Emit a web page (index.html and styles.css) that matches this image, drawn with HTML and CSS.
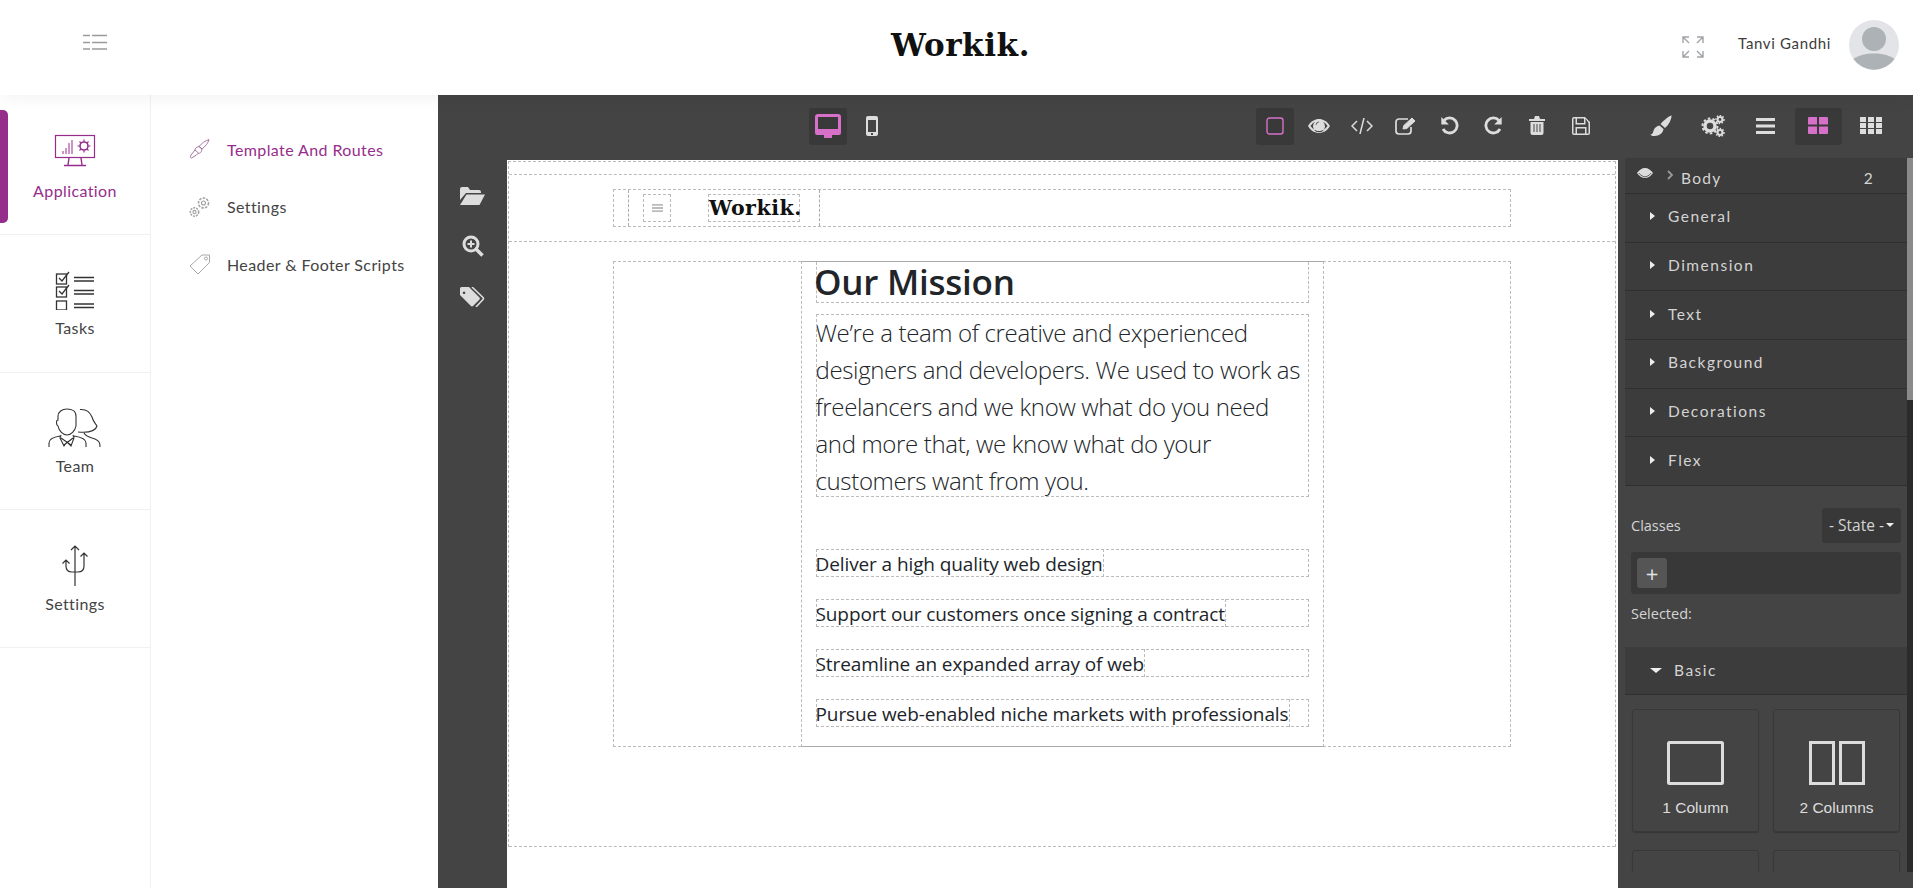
FILE: index.html
```html
<!DOCTYPE html>
<html lang="en">
<head>
<meta charset="utf-8">
<title>Workik</title>
<link rel="stylesheet" href="styles.css">
</head>
<body>
<header class="topbar">
  <div class="topbar-menu">
    <svg class="hamburger" width="24" height="16" viewBox="0 0 24 16"><path d="M0 1.500h7M9 1.500h15M0 8.500h7M9 8.500h15M0 15h7M9 15h15" stroke="#9a9a9a" stroke-width="1.600" fill="none"/></svg>
  </div>
  <div class="brand">Workik.</div>
  <div class="topbar-user">
    <svg class="expand" width="22" height="22" viewBox="0 0 22 22" fill="none" stroke="#9ea3a8" stroke-width="1.400"><path d="M1 7V1h6M1 1l6 6M15 1h6v6M21 1l-6 6M1 15v6h6M1 21l6-6M21 15v6h-6M21 21l-6-6"/></svg>
    <span class="user-name">Tanvi Gandhi</span>
    <svg class="avatar" width="50" height="50" viewBox="0 0 50 50"><circle cx="25" cy="25" r="25" fill="#e2e4e7"/><circle cx="25" cy="19" r="12" fill="#adb2b6"/><path d="M4.500 39C10 35 17 33.500 25 33.500S40 35 45.500 39A25 25 0 0 1 4.500 39Z" fill="#adb2b6"/></svg>
  </div>
</header>

<div class="workspace">
  <nav class="mainnav">
    <a class="mainnav-item is-active">
      <svg width="42" height="33" viewBox="0 0 42 33" fill="none" stroke="#962d8b" stroke-width="1.200"><rect x="1.500" y="1.500" width="39" height="22"/><path d="M9 20v-3M12 20v-6M15 20V9M18 20V6" stroke-width="1"/><circle cx="30" cy="12" r="4" stroke-width="1.600"/><path d="M30 5.500v2M30 16.500v2M23.500 12h2M34.500 12h2M25.500 7.500l1.300 1.300M33.200 15.200l1.300 1.300M34.500 7.500l-1.300 1.300M26.800 15.200l-1.300 1.300" stroke-width="1.200"/><path d="M15 24l-1 7M27 24l1 7M10 31.500h22" stroke-width="1.400"/></svg>
      <span>Application</span>
    </a>
    <a class="mainnav-item">
      <svg width="40" height="40" viewBox="0 0 40 40" fill="none" stroke="#333" stroke-width="1.300"><rect x="1.500" y="4" width="10" height="10"/><rect x="1.500" y="17" width="10" height="10"/><rect x="1.500" y="31" width="10" height="9"/><path d="M4 8l3 3 7-9M4 21l3 3 7-9" /><path d="M19 7.500h20M19 11h20M19 20.500h20M19 24h20M19 34h20M19 37.500h20"/></svg>
      <span>Tasks</span>
    </a>
    <a class="mainnav-item">
      <svg width="54" height="40" viewBox="0 0 54 40" fill="none" stroke="#333" stroke-width="1.100"><path d="M10 12C8 12 8 17 10 18C11 23 15 27 19 27S27 23 28 18V8C28 3 24 1 19 1S10 4 10 8Z"/><path d="M1 39V35C1 31 6 29 12 28M38 39V35C38 31 33 29 26 28M13 27l-1 3 4 8 3-4 4 4 3-8-1-3M13 30l10 7M25 30l-9 7"/><path d="M32 1.500C38 1 42 4 44 9C45 13 47 15 49 18C48 22 42 25 30 24M36 25C38 29 42 29 47 31C52 33 52 36 52 39"/></svg>
      <span>Team</span>
    </a>
    <a class="mainnav-item">
      <svg width="28" height="41" viewBox="0 0 28 41" fill="none" stroke="#333" stroke-width="1.200"><path d="M14 1v40M10 5l4-4 4 4M5 15v6c0 4 2 6 6 6h6c4 0 6-2 6-6V8M1.500 18.500 5 15l3.500 3.500M19.500 11.500 23 8l3.500 3.500"/></svg>
      <span>Settings</span>
    </a>
  </nav>

  <aside class="subnav">
    <a class="subnav-item is-active">
      <svg width="22" height="22" viewBox="0 0 22 22" fill="none" stroke="#a878a3" stroke-width="1"><path d="M20 1.500c-1 4-4 7-7 9.500l-3-2.500C13 5 16 3 20 1.500ZM10 8.500l3 2.500c-.5 3-2 5-3.500 4L6 12c-.5-1.500 2-3 4-3.500ZM6 12l-4 5c-1 2-.5 3 .5 3l5-3 2-2"/></svg>
      <span>Template And Routes</span>
    </a>
    <a class="subnav-item">
      <svg width="22" height="22" viewBox="0 0 22 22" fill="none" stroke="#a0a0a0" stroke-width="1.100"><circle cx="14.500" cy="7" r="2"/><circle cx="14.500" cy="7" r="5" stroke-dasharray="2.500 1.200" stroke-width="1.500"/><circle cx="5.500" cy="16" r="1.600"/><circle cx="5.500" cy="16" r="4.200" stroke-dasharray="2 1" stroke-width="1.500"/></svg>
      <span>Settings</span>
    </a>
    <a class="subnav-item">
      <svg width="22" height="22" viewBox="0 0 22 22" fill="none" stroke="#a8a8a8" stroke-width="1"><path d="M1 13 13 2h7.500v7.500L9 21Z"/><circle cx="17" cy="5.500" r="1.500"/></svg>
      <span>Header &amp; Footer Scripts</span>
    </a>
  </aside>

  <main class="editor">
    <div class="toolbar">
      <div class="tool-group">
        <button class="tool is-on"><svg width="26" height="24" viewBox="0 0 26 24"><path d="M3 0h20a3 3 0 0 1 3 3v16a2 2 0 0 1-2 2h-7v3H9v-3H2a2 2 0 0 1-2-2V3a3 3 0 0 1 3-3Zm0 3v12h20V3Z" fill="#d670c9" fill-rule="evenodd"/></svg></button>
        <button class="tool"><svg width="12" height="20" viewBox="0 0 12 20"><path d="M2 0h8a2 2 0 0 1 2 2v16a2 2 0 0 1-2 2H2a2 2 0 0 1-2-2V2a2 2 0 0 1 2-2Zm0 4v12h8V4Z" fill="#ddd" fill-rule="evenodd"/><rect x="5" y="17" width="2" height="2" fill="#444"/></svg></button>
      </div>
      <div class="tool-group actions">
        <button class="tool is-on"><svg width="18" height="18" viewBox="0 0 18 18"><rect x="1" y="1" width="16" height="16" rx="2.500" fill="none" stroke="#d670c9" stroke-width="1.400"/></svg></button>
        <button class="tool"><svg width="22" height="14" viewBox="0 0 22 14"><path d="M0 7C3 2 7 0 11 0s8 2 11 7c-3 5-7 7-11 7S3 12 0 7Zm2.500 0c2.500 3.500 5.500 5 8.500 5s6-1.500 8.500-5C18 5 16.500 3.500 15 2.800a6 6 0 1 1-8 0C5.500 3.500 4 5 2.500 7Z" fill="#ddd" fill-rule="evenodd"/><circle cx="11" cy="7" r="5" fill="#ddd"/><path d="M8 6a3 3 0 0 1 3-3" stroke="#666" fill="none"/></svg></button>
        <button class="tool"><svg width="22" height="16" viewBox="0 0 22 16" fill="none" stroke="#ddd" stroke-width="1.500"><path d="M6 3 1 8l5 5M16 3l5 5-5 5M13 0 9 16"/></svg></button>
        <button class="tool"><svg width="22" height="18" viewBox="0 0 22 18" fill="none" stroke="#ddd" stroke-width="1.700"><path d="M13 2H4a3 3 0 0 0-3 3v9a3 3 0 0 0 3 3h9a3 3 0 0 0 3-3v-4"/><path d="M8 12l.8-3.500L17 1l3 3-8.200 7.500Z" fill="#ddd" stroke-width="1"/></svg></button>
        <button class="tool"><svg width="19" height="19" viewBox="0 0 19 19" fill="none" stroke="#ddd" stroke-width="2.800"><path d="M4 4.500a7.500 7.500 0 1 1-1 8.500"/><path d="M1.300 1v7.500h7.500L1.300 1Z" fill="#ddd" stroke="none"/></svg></button>
        <button class="tool"><svg width="19" height="19" viewBox="0 0 19 19" fill="none" stroke="#ddd" stroke-width="2.800"><path d="M15 4.500a7.500 7.500 0 1 0 1 8.500"/><path d="M17.700 1v7.500h-7.500L17.700 1Z" fill="#ddd" stroke="none"/></svg></button>
        <button class="tool"><svg width="16" height="19" viewBox="0 0 16 19"><path d="M0 3h5l1-3h4l1 3h5v2H0ZM1.500 6h13v11a2 2 0 0 1-2 2h-9a2 2 0 0 1-2-2Z" fill="#ddd"/><path d="M5 8v8M8 8v8M11 8v8" stroke="#555" stroke-width="1.100"/></svg></button>
        <button class="tool"><svg width="18" height="18" viewBox="0 0 18 18"><path d="M2 0h11l5 5v11a2 2 0 0 1-2 2H2a2 2 0 0 1-2-2V2a2 2 0 0 1 2-2Zm3 1.500V6h7V1.500ZM1.500 16.500h2V10h11v6.500h2V6L13.500 1.800V7.500h-10V1.500h-2ZM5 11.500v5h8v-5Z" fill="#ddd" fill-rule="evenodd"/></svg></button>
      </div>
      <div class="tool-group panels">
        <button class="tool wide"><svg width="22" height="22" viewBox="0 0 22 22"><path d="M21.500.5c.5 3-3 10-6.500 12.500L10.500 9C14 5 19 1 21.500.5ZM9.500 10.500l4 3.500c-.5 4-4 7-9 7-2 0-3.500-.5-4-1.500 3-.5 2.500-3 3.500-5s3-3.500 5.500-4Z" fill="#ddd"/></svg></button>
        <button class="tool wide"><svg width="24" height="22" viewBox="0 0 24 22" fill="none" stroke="#ddd"><circle cx="9" cy="11" r="5" stroke-width="3.500"/><circle cx="9" cy="11" r="7.500" stroke-width="2" stroke-dasharray="2.500 2.200"/><circle cx="19" cy="4.500" r="2.400" stroke-width="2"/><circle cx="19" cy="4.500" r="4" stroke-width="1.500" stroke-dasharray="1.500 1.500"/><circle cx="19" cy="17.500" r="2.400" stroke-width="2"/><circle cx="19" cy="17.500" r="4" stroke-width="1.500" stroke-dasharray="1.500 1.500"/></svg></button>
        <button class="tool wide"><svg width="19" height="16" viewBox="0 0 19 16"><path d="M0 0h19v3H0ZM0 6.500h19v3H0ZM0 13h19v3H0Z" fill="#ddd"/></svg></button>
        <button class="tool wide is-on"><svg width="20" height="17" viewBox="0 0 20 17"><path d="M1 0h8v7.500H0V1a1 1 0 0 1 1-1ZM11 0h8a1 1 0 0 1 1 1v6.500h-9ZM0 9.500h9V17H1a1 1 0 0 1-1-1ZM11 9.500h9V16a1 1 0 0 1-1 1h-8Z" fill="#d670c9"/></svg></button>
        <button class="tool wide"><svg width="22" height="17" viewBox="0 0 22 17"><path d="M0 0h6v5H0ZM8 0h6v5H8ZM16 0h6v5h-6ZM0 6h6v5H0ZM8 6h6v5H8ZM16 6h6v5h-6ZM0 12h6v5H0ZM8 12h6v5H8ZM16 12h6v5h-6Z" fill="#ddd"/></svg></button>
      </div>
    </div>

    <div class="stage">
      <div class="rail">
        <svg width="25" height="18" viewBox="0 0 25 18"><path d="M0 2a2 2 0 0 1 2-2h6l2 3h9a2 2 0 0 1 2 2v1H6L0 13Z" fill="#ddd"/><path d="M6.500 7.500H25L19.500 18H0Z" fill="#ddd"/></svg>
        <svg width="22" height="22" viewBox="0 0 22 22" fill="none"><circle cx="9" cy="9" r="7" stroke="#ddd" stroke-width="3"/><path d="M14 14l6.500 6.500" stroke="#ddd" stroke-width="3.500"/><path d="M5.500 9h7M9 5.500v7" stroke="#ddd" stroke-width="2"/></svg>
        <svg width="25" height="20" viewBox="0 0 25 20"><path d="M0 1.500A1.500 1.500 0 0 1 1.500 0H9l10.500 10.500a1.500 1.500 0 0 1 0 2L13 19a1.500 1.500 0 0 1-2 0L0 8Zm4 3a1.300 1.300 0 1 0 .1 0Z" fill="#ddd" fill-rule="evenodd"/><path d="M12 0l11 10.500a1.500 1.500 0 0 1 0 2L16 20" fill="none" stroke="#ddd" stroke-width="1.600"/></svg>
      </div>

      <section class="canvas">
        <div class="page-frame">
          <div class="site-head">
            <div class="head-container">
              <div class="head-row">
                <div class="menu-box"><svg width="11" height="8" viewBox="0 0 11 8"><path d="M0 0h11v1.800H0ZM0 3.100h11v1.800H0ZM0 6.200h11V8H0Z" fill="#bbb"/></svg></div>
                <div class="logo-box">Workik.</div>
              </div>
            </div>
          </div>
          <div class="site-main">
            <div class="main-container">
              <div class="mission">
                <h1 class="mission-title">Our Mission</h1>
                <div class="mission-text"><p>We’re a team of creative and experienced designers and developers. We used to work as freelancers and we know what do you need and more that, we know what do your customers want from you.</p></div>
                <ul class="mission-list">
                  <li><span>Deliver a high quality web design</span></li>
                  <li><span>Support our customers once signing a contract</span></li>
                  <li><span>Streamline an expanded array of web</span></li>
                  <li><span>Pursue web-enabled niche markets with professionals</span></li>
                </ul>
              </div>
            </div>
          </div>
        </div>
      </section>

      <aside class="panel">
        <div class="panel-scroll">
          <div class="panel-content">
            <div class="layer-row">
              <svg class="layer-eye" width="16" height="10" viewBox="0 0 16 10"><path d="M0 5c2-3 5-5 8-5s6 2 8 5c-2 3-5 5-8 5S2 8 0 5Z" fill="#ddd"/><path d="M1.800 5C4 7.500 6 8.800 8 8.800S12 7.500 14.200 5" fill="none" stroke="#3c3c3c" stroke-width=".8"/></svg>
              <svg class="layer-chevron" width="7" height="10" viewBox="0 0 7 10"><path d="M1 1l4 4-4 4" fill="none" stroke="#999" stroke-width="1.800"/></svg>
              <span class="layer-name">Body</span>
              <span class="layer-count">2</span>
            </div>
            <div class="prop-row"><i class="caret"></i>General</div>
            <div class="prop-row"><i class="caret"></i>Dimension</div>
            <div class="prop-row"><i class="caret"></i>Text</div>
            <div class="prop-row"><i class="caret"></i>Background</div>
            <div class="prop-row"><i class="caret"></i>Decorations</div>
            <div class="prop-row"><i class="caret"></i>Flex</div>

            <div class="classes">
              <div class="classes-head">
                <span>Classes</span>
                <div class="state">- State -<i class="caret-down small"></i></div>
              </div>
              <div class="class-box"><button class="class-add">+</button></div>
              <div class="selected">Selected:</div>
            </div>

            <div class="section-head"><i class="caret-down"></i>Basic</div>
            <div class="blocks">
              <div class="block">
                <svg width="57" height="44" viewBox="0 0 57 44"><rect x="1.500" y="1.500" width="54" height="41" rx="1" fill="none" stroke="#ddd" stroke-width="3"/></svg>
                <span>1 Column</span>
              </div>
              <div class="block">
                <svg width="56" height="44" viewBox="0 0 56 44"><path d="M1.500 1.500h23v41h-23ZM31.500 1.500h23v41h-23Z" fill="none" stroke="#ddd" stroke-width="3"/></svg>
                <span>2 Columns</span>
              </div>
              <div class="block"></div>
              <div class="block"></div>
            </div>
          </div>
          <div class="scrollbar"><div class="scrollbar-thumb"></div></div>
        </div>
      </aside>
    </div>
  </main>
</div>
</body>
</html>
```

FILE: styles.css
```css
* { box-sizing: border-box; }
html, body { margin: 0; height: 888px; overflow: hidden; }
body {
  display: flex;
  flex-direction: column;
  background: #fff;
  color: #333;
  font-family: Lato, "Noto Sans", sans-serif;
}
svg { display: block; flex: none; }
button { border: 0; padding: 0; background: none; font: inherit; color: inherit; }

/* top bar */
.topbar {
  position: relative;
  z-index: 1;
  flex: none;
  height: 95px;
  display: flex;
  align-items: center;
  background: #fff;
  box-shadow: 0 2px 18px rgba(0, 0, 0, .06);
}
.topbar-menu { width: 891px; padding: 0 0 11px 83px; }
.brand {
  font-family: "DejaVu Serif", serif;
  font-weight: 700;
  font-size: 31px;
  letter-spacing: .6px;
  color: #111;
  margin-top: -5px;
}
.topbar-user {
  margin-left: auto;
  display: flex;
  align-items: center;
  padding: 0 14px 5px 0;
}
.expand { margin-right: 34px; margin-top: 3px; }
.user-name { font-size: 15px; letter-spacing: .65px; margin-right: 18px; margin-top: -4px; color: #3c3c3c; }

/* main layout */
.workspace { flex: 1; display: flex; min-height: 0; }

.mainnav {
  width: 151px;
  flex: none;
  display: grid;
  grid-template-rows: 140px 138px 137px 138px;
  align-content: start;
  border-right: 1px solid #f1f1f1;
}
.mainnav-item {
  position: relative;
  display: flex;
  flex-direction: column;
  align-items: center;
  justify-content: center;
  gap: 8px;
  border-bottom: 1px solid #f1f1f1;
  font-size: 16px;
  letter-spacing: .4px;
  color: #444;
}
.mainnav-item.is-active { color: #962d8b; gap: 14px; padding-top: 4px; }
.mainnav-item.is-active::before {
  content: "";
  position: absolute;
  left: 0;
  top: 15px;
  width: 8px;
  height: 113px;
  background: #962d8b;
  border-radius: 0 5px 5px 0;
}

.subnav {
  width: 287px;
  flex: none;
  padding: 43px 0 0 38px;
  display: flex;
  flex-direction: column;
  gap: 35.500px;
}
.subnav-item {
  display: flex;
  align-items: center;
  gap: 16px;
  height: 22px;
  font-size: 16px;
  letter-spacing: .4px;
  color: #444;
}
.subnav-item.is-active { color: #962d8b; }

/* editor */
.editor {
  flex: 1;
  min-width: 0;
  display: flex;
  flex-direction: column;
  background: #444;
}
.toolbar {
  flex: none;
  height: 63px;
  display: flex;
  align-items: flex-start;
  padding: 13px 0 0 367.500px;
}
.tool-group { display: flex; }
.actions { margin-left: 359.500px; }
.actions .tool { width: 43.700px; }
.panels { margin-left: 32.150px; }
.tool {
  position: relative;
  width: 44px;
  height: 37px;
  display: flex;
  align-items: center;
  justify-content: center;
}
.tool.wide { width: 52.500px; }
.tool.is-on::before {
  content: "";
  position: absolute;
  top: 0;
  bottom: 0;
  left: 3px;
  right: 3px;
  background: #393939;
  border-radius: 3px;
}
.tool svg { position: relative; margin-top: -2px; }

.stage { flex: 1; display: flex; min-height: 0; }
.rail {
  width: 69px;
  flex: none;
  padding-top: 29px;
  display: flex;
  flex-direction: column;
  align-items: center;
  gap: 30px;
}

/* canvas */
.canvas {
  flex: 1;
  min-width: 0;
  margin-top: 2px;
  background: #fff;
  padding: 1px 2px 0 1px;
  font-family: "Open Sans", "Noto Sans", sans-serif;
  color: #212529;
}
.page-frame {
  border: 1px dashed #bbb;
  border-bottom: 0;
  padding-top: 12px;
}
.site-head {
  height: 68px;
  border-top: 1px dashed #bbb;
  border-bottom: 1px dashed #bbb;
  padding-top: 14px;
}
.head-container {
  width: 898px;
  height: 38px;
  margin: 0 auto;
  border: 1px dashed #bbb;
  padding-left: 14px;
}
.head-row {
  width: 192px;
  height: 36px;
  border-left: 1px dashed #aaa;
  border-right: 1px dashed #aaa;
  display: flex;
  align-items: center;
  padding-left: 14px;
}
.menu-box {
  width: 28px;
  height: 28px;
  border: 1px dashed #bbb;
  display: flex;
  align-items: center;
  justify-content: center;
}
.logo-box {
  width: 92px;
  height: 28px;
  margin-left: 37px;
  border: 1px dashed #bbb;
  font-family: "DejaVu Serif", serif;
  font-weight: 700;
  font-size: 20.500px;
  line-height: 26px;
  letter-spacing: .55px;
  white-space: nowrap;
  color: #111;
}
.site-main { height: 605px; border-bottom: 1px dashed #bbb; padding-top: 19px; }
.main-container {
  width: 898px;
  height: 486px;
  margin: 0 auto;
  border: 1px dashed #bbb;
  display: flex;
  justify-content: center;
}
.mission {
  width: 523px;
  margin: -1px 0;
  padding: 0 14px 18px;
  border-top: 1px solid #aaa;
  border-bottom: 1px solid #aaa;
  border-left: 1px dashed #bbb;
  border-right: 1px dashed #bbb;
}
.mission-title {
  margin: 0 0 12px;
  height: 41px;
  border: 1px dashed #bbb;
  border-top: 0;
  font-size: 35px;
  font-weight: 600;
  line-height: 40px;
  letter-spacing: -.25px;
  text-indent: -2.500px;
  white-space: nowrap;
  color: #212529;
}
.mission-text {
  margin: 0 0 52px;
  height: 183px;
  outline: 1px dashed #bbb;
  outline-offset: -1px;
  font-size: 24px;
  font-weight: 300;
  line-height: 37px;
  letter-spacing: -.35px;
  color: #212529;
}
.mission-text p { margin: -1px 0 0; }
.mission-list {
  list-style: none;
  margin: 0;
  padding: 0;
  display: flex;
  flex-direction: column;
  gap: 22px;
}
.mission-list li {
  height: 28px;
  outline: 1px dashed #bbb;
  outline-offset: -1px;
  font-size: 19px;
  line-height: 30px;
  letter-spacing: -.1px;
  white-space: nowrap;
}
.mission-list span {
  display: inline-block;
  height: 28px;
  border-right: 1px dashed #bbb;
}

/* right panel */
.panel {
  width: 295px;
  flex: none;
  padding: 0 0 16px 7px;
  color: #d4d4d4;
}
.panel-scroll { height: 714px; display: flex; }
.panel-content { flex: 1; min-width: 0; overflow: hidden; }
.scrollbar { width: 6px; flex: none; background: #2b2b2b; }
.scrollbar-thumb { height: 242px; background: #8a8a8a; }

.layer-row {
  height: 36px;
  display: flex;
  align-items: center;
  background: #3c3c3c;
  border-bottom: 1px solid #2f2f2f;
  padding-left: 12px;
  font-size: 15.500px;
  letter-spacing: 1.300px;
}
.layer-eye { margin-top: -6px; }
.layer-chevron { margin: -1px 0 0 14px; }
.layer-name { margin: 4px 0 0 7px; }
.layer-count { margin: 4px 0 0 auto; padding-right: 33px; }

.prop-row {
  height: 48.670px;
  display: flex;
  align-items: center;
  background: #3c3c3c;
  border-bottom: 1px solid #2f2f2f;
  padding: 0 0 3px 25px;
  font-size: 15.500px;
  letter-spacing: 1.500px;
}
.caret {
  width: 0;
  height: 0;
  margin-right: 13px;
  border-left: 5px solid #eee;
  border-top: 4px solid transparent;
  border-bottom: 4px solid transparent;
}

.classes {
  padding: 22px 6px 0;
  height: 161px;
  font-family: "Open Sans", "Noto Sans", sans-serif;
  font-size: 14.500px;
}
.classes-head { display: flex; align-items: center; justify-content: space-between; }
.state {
  width: 79px;
  height: 35px;
  display: flex;
  align-items: center;
  justify-content: center;
  gap: 2px;
  background: #383838;
  border-radius: 3px;
  font-size: 15.500px;
}
.class-box {
  height: 42px;
  margin-top: 9px;
  padding: 6px;
  background: #383838;
  border-radius: 3px;
}
.class-add {
  display: block;
  width: 30px;
  height: 30px;
  background: #555;
  border-radius: 3px;
  font-size: 22px;
  line-height: 28px;
  text-align: center;
  color: #e2e2e2;
}
.selected { margin-top: 10px; }

.caret-down {
  width: 0;
  height: 0;
  border-top: 5px solid #eee;
  border-left: 6px solid transparent;
  border-right: 6px solid transparent;
  margin-right: 12px;
}
.caret-down.small {
  border-top-width: 4px;
  border-left-width: 4px;
  border-right-width: 4px;
  margin: 0;
}
.section-head {
  height: 48px;
  display: flex;
  align-items: center;
  background: #3c3c3c;
  border-bottom: 1px solid #2f2f2f;
  padding-left: 25px;
  font-size: 15.500px;
  letter-spacing: 1.500px;
}
.blocks {
  display: grid;
  grid-template-columns: 127px 127px;
  grid-auto-rows: 123px;
  column-gap: 14px;
  row-gap: 18px;
  padding: 14px 0 0 7px;
}
.block {
  display: flex;
  flex-direction: column;
  align-items: center;
  padding-top: 31px;
  gap: 14px;
  border: 1px solid #383838;
  border-radius: 3px;
  box-shadow: 0 1px 1px rgba(0, 0, 0, .2);
  font-family: "Liberation Sans", Arial, sans-serif;
  font-size: 15.500px;
  color: #ddd;
}
```
